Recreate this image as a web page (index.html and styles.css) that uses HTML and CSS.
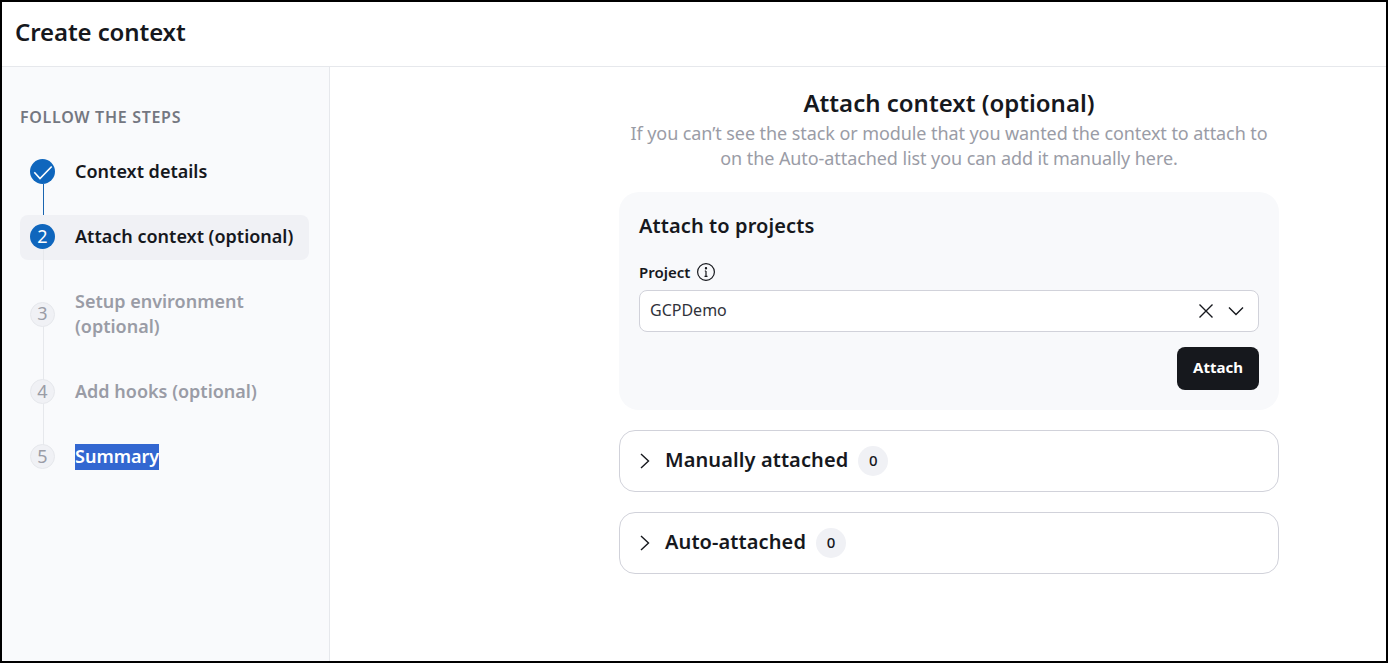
FILE: index.html
```html
<!DOCTYPE html>
<html lang="en">
<head>
<meta charset="utf-8">
<title>Create context</title>
<link rel="stylesheet" href="styles.css">
</head>
<body>
<div class="frame">
  <header class="topbar"><h1 class="page-title">Create context</h1></header>
  <div class="body">
    <aside class="sidebar">
      <div class="steps-title">FOLLOW THE STEPS</div>
      <ol class="steps">
        <li class="step step-done">
          <span class="bullet bullet-blue"><svg width="25" height="25" viewBox="0 0 25 25" fill="none"><path d="M4.3 13.3 L10 19.5 L21.7 7.5" stroke="#fff" stroke-width="1.6"/></svg></span>
          <span class="step-label">Context details</span>
        </li>
        <li class="step step-active">
          <span class="bullet bullet-blue">2</span>
          <span class="step-label">Attach context (optional)</span>
        </li>
        <li class="step step-muted">
          <span class="bullet">3</span>
          <span class="step-label">Setup environment<br>(optional)</span>
        </li>
        <li class="step step-muted">
          <span class="bullet">4</span>
          <span class="step-label">Add hooks (optional)</span>
        </li>
        <li class="step step-last">
          <span class="bullet">5</span>
          <span class="step-label"><span class="selected">Summary</span></span>
        </li>
      </ol>
    </aside>
    <main class="main">
      <div class="column">
        <h2 class="main-title">Attach context (optional)</h2>
        <p class="main-sub">If you can’t see the stack or module that you wanted the context to attach to on the Auto-attached list you can add it manually here.</p>
        <section class="panel">
          <h3 class="panel-title">Attach to projects</h3>
          <div class="field-label">
            <span>Project</span>
            <svg width="20" height="20" viewBox="0 0 20 20" fill="none" stroke="#16181d" stroke-width="1.2"><circle cx="10" cy="10" r="8.4"/><path d="M10 9v5.2M8.5 14.4h3M8.8 9h1.2"/><circle cx="10" cy="6.2" r="0.6" fill="#16181d"/></svg>
          </div>
          <div class="select">
            <span class="select-value">GCPDemo</span>
            <svg class="select-x" width="16" height="16" viewBox="0 0 16 16" fill="none" stroke="#16181d" stroke-width="1.4"><path d="M1.5 1.5 L14.5 14.5 M14.5 1.5 L1.5 14.5"/></svg>
            <svg class="select-chev" width="16" height="16" viewBox="0 0 16 16" fill="none" stroke="#16181d" stroke-width="1.4"><path d="M1 4.5 L8 11.5 L15 4.5"/></svg>
          </div>
          <div class="panel-actions"><button class="btn" type="button">Attach</button></div>
        </section>
        <section class="card">
          <svg class="card-chev" width="12" height="18" viewBox="0 0 12 18" fill="none" stroke="#16181d" stroke-width="1.4"><path d="M2 2 L9.5 9 L2 16"/></svg>
          <span class="card-title">Manually attached</span>
          <span class="count">0</span>
        </section>
        <section class="card">
          <svg class="card-chev" width="12" height="18" viewBox="0 0 12 18" fill="none" stroke="#16181d" stroke-width="1.4"><path d="M2 2 L9.5 9 L2 16"/></svg>
          <span class="card-title">Auto-attached</span>
          <span class="count">0</span>
        </section>
      </div>
    </main>
  </div>
</div>
</body>
</html>
```
FILE: styles.css
```css
* { box-sizing: border-box; }
html, body { height: 100%; }
body {
  margin: 0;
  background: #fff;
  color: #16181d;
  font-family: "Noto Sans", "Open Sans", sans-serif;
  overflow: hidden;
}
.frame {
  height: 663px;
  border: 2px solid #000;
  display: flex;
  flex-direction: column;
}
.topbar {
  height: 65px;
  flex: none;
  border-bottom: 1px solid #e6e8ec;
  display: flex;
  align-items: center;
  padding: 0 13px 6px;
}
.page-title { margin: 0; font-size: 24px; font-weight: 600; letter-spacing: -0.1px; }
.body { flex: 1; display: flex; min-height: 0; }
.sidebar {
  width: 328px;
  flex: none;
  background: #f9fafc;
  border-right: 1px solid #e6e8ec;
  padding: 40px 20px 0 18px;
}
.steps-title {
  font-size: 16px;
  font-weight: 600;
  line-height: 20px;
  color: #747781;
  letter-spacing: 0.7px;
}
.steps { list-style: none; margin: 23px 0 0; padding: 0; display: flex; flex-direction: column; gap: 20px; }
.step {
  position: relative;
  display: flex;
  align-items: center;
  gap: 20px;
  padding: 9px 10px 11px;
  border-radius: 8px;
}
.step::after {
  content: "";
  position: absolute;
  left: 23px;
  width: 1px;
  top: calc(50% + 11px);
  bottom: -30px;
  background: #e6e8ec;
}
.step-done::after { background: #1a65b0; }
.step-last::after { display: none; }
.step-active { background: #f0f1f5; }
.bullet {
  width: 25px;
  height: 25px;
  flex: none;
  padding-bottom: 2px;
  border-radius: 50%;
  background: #f0f1f5;
  border: 1px solid #e6e8ec;
  color: #9a9ca6;
  display: flex;
  align-items: center;
  justify-content: center;
  font-size: 18px;
  position: relative;
  z-index: 1;
}
.bullet-blue { background: #0f66bd; border: 0; color: #fff; overflow: hidden; }
.step-done .bullet { padding: 0; }
.step-label { font-size: 18px; line-height: 25px; font-weight: 600; letter-spacing: 0; white-space: nowrap; }
.step-muted .step-label { color: #9a9ca6; }
.selected { display: block; height: 26px; margin-bottom: -1px; background: #3367d1; color: #fff; }
.main { flex: 1; padding: 24px 0 0 289px; min-width: 0; }
.column { width: 660px; }
.main-title { margin: 0 0 6px; font-size: 24px; line-height: 24px; font-weight: 600; text-align: center; letter-spacing: 0; }
.main-sub {
  margin: 0;
  font-size: 18px;
  line-height: 25px;
  color: #9a9ca6;
  text-align: center;
  padding: 0 10px;
  letter-spacing: -0.08px;
}
.panel {
  margin-top: 21px;
  height: 218px;
  background: #f8f9fb;
  border-radius: 20px;
  padding: 21px 20px 20px;
}
.panel-title { margin: 0; font-size: 20px; line-height: 26px; font-weight: 600; letter-spacing: 0.1px; }
.field-label {
  margin-top: 23px;
  display: flex;
  align-items: center;
  gap: 6px;
  font-size: 15px;
  line-height: 20px;
  font-weight: 600;
}
.select {
  margin-top: 8px;
  height: 42px;
  background: #fff;
  border: 1px solid #d1d2da;
  border-radius: 8px;
  display: flex;
  align-items: center;
  padding: 0 14px 0 10px;
  font-size: 16px;
  color: #30323a;
}
.select-value { flex: 1; padding-bottom: 2px; }
.select-chev { margin-left: 14px; }
.panel-actions { margin-top: 15px; display: flex; justify-content: flex-end; }
.btn {
  width: 82px;
  height: 43px;
  padding: 0 0 4px;
  background: #16181d;
  color: #fff;
  border: 0;
  border-radius: 8px;
  font-family: inherit;
  font-size: 15px;
  font-weight: 700;
}
.card {
  margin-top: 20px;
  height: 62px;
  border: 1px solid #d1d2da;
  border-radius: 16px;
  display: flex;
  align-items: center;
  padding: 0 19px;
  background: #fff;
}
.card-title { margin-left: 14px; margin-right: 10px; padding-bottom: 4px; font-size: 20px; font-weight: 600; letter-spacing: 0.1px; }
.count {
  width: 30px;
  height: 30px;
  border-radius: 50%;
  background: #f0f1f5;
  display: flex;
  align-items: center;
  justify-content: center;
  font-size: 15px;
  font-weight: 500;
  padding-bottom: 2px;
}
```
